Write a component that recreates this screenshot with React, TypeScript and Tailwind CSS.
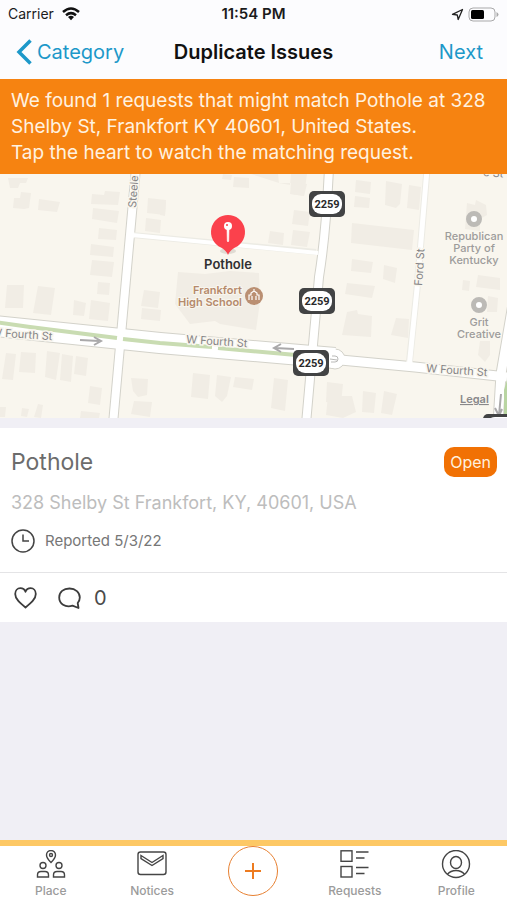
import { useState } from "react";
import type { ReactNode } from "react";

const buildings = [
  "8,4 28,4 26,9 20,9 18,14 10,14 9,9",
  "14,24 20,24 21,18 31,19 29,34 24,35 13,34",
  "39,25 60,28 57,38 38,36",
  "92,20 104,21 105,17 120,18 118,31 91,30",
  "93,34 119,37 117,49 92,45",
  "99,54 117,56 116,66 98,65",
  "91,70 114,73 113,83 90,81",
  "92,86 114,88 112,103 90,101",
  "98,108 110,109 109,121 97,120",
  "148,24 166,26 165,41 147,39",
  "146,44 161,46 160,59 145,57",
  "7,111 24,111 23,134 5,134",
  "38,112 55,114 51,141 33,139",
  "74,126 86,129 84,142 73,141",
  "91,126 110,129 108,147 89,145",
  "144,116 160,118 158,134 141,132",
  "142,134 161,136 160,147 141,145",
  "6,179 16,180 13,206 2,205",
  "21,178 36,179 35,199 19,198",
  "47,177 60,179 56,206 45,203",
  "62,180 73,182 71,208 60,206",
  "76,182 88,184 86,202 74,200",
  "90,212 102,214 100,231 88,229",
  "38,230 43,231 41,244 34,243",
  "22,234 29,235 27,243 21,242",
  "0,233 6,233 5,243 0,243",
  "81,237 100,239 99,244 80,244",
  "131,204 148,205 147,221 138,223 133,217",
  "134,227 152,228 150,243 131,240",
  "160,26 166,28 165,42 160,41",
  "234,3 249,4 249,14 233,13",
  "223,0 232,1 231,6 222,5",
  "251,0 278,0 279,9 290,11 291,0 307,0 304,22 291,20 291,9 279,9",
  "291,8 307,10 304,22 290,20",
  "294,36 310,38 308,52 292,50",
  "270,57 284,59 283,71 268,69",
  "293,56 310,58 307,73 291,71",
  "178,98 205,100 230,97 259,99 260,128 256,156 220,150 215,147 190,150 175,130",
  "193,199 210,201 208,225 191,223",
  "217,201 231,203 227,222 222,228 215,222",
  "235,203 254,205 252,216 233,213",
  "274,204 288,206 285,237 271,234",
  "327,208 343,210 341,230 326,228",
  "328,222 352,222 356,238 343,244 326,241",
  "363,217 376,219 374,239 362,238",
  "384,217 397,220 392,241 381,239",
  "356,6 371,8 370,20 355,18",
  "355,22 370,24 369,34 354,33",
  "386,7 402,10 400,30 396,34 385,31",
  "409,11 421,13 419,36 407,34",
  "352,49 414,56 412,76 351,69",
  "352,85 373,88 371,99 351,97",
  "384,91 397,94 395,109 383,105",
  "347,109 375,112 372,124 345,120",
  "347,138 357,136 358,140 372,142 371,163 342,161",
  "396,144 409,145 408,164 391,161",
  "467,29 475,31 476,26 486,31 487,41 480,45 480,57 465,55",
  "478,101 500,104 500,116 476,113",
  "463,106 470,107 469,117 462,116",
  "488,122 498,124 497,138 487,138",
  "480,167 490,167 490,181 485,188 478,181",
];

const routeShields = [
  { x: 327, y: 30 },
  { x: 317, y: 127 },
  { x: 311, y: 189 },
  { x: 501, y: 253 },
];

function IssueMap() {
  return (
    <svg
      viewBox="0 0 507 244"
      className="block w-full"
      role="img"
      aria-label="Map"
      fontFamily="Inter, sans-serif"
      fill="none"
    >
      <rect width="507" height="244" fill="#f9f6ee" />
      <g fill="#f1ede5">
        {buildings.map((points) => (
          <polygon key={points} points={points} />
        ))}
      </g>

      {/* road edges */}
      <g stroke="#d3d2ca">
        <path d="M136 -6L113 250" strokeWidth="10" />
        <path d="M329 -6Q326 60 319 103L306 250" strokeWidth="10" />
        <path d="M-5 152L160 169L335 184" strokeWidth="22" />
        <path d="M330 185L415 193L507 203" strokeWidth="11" />
        <path d="M513 130L501 200L498 250" strokeWidth="11" />
      </g>
      <circle cx="335" cy="185" r="10" fill="#fff" stroke="#d3d2ca" />
      <g stroke="#ecebe4">
        <path d="M132 61L316 78" strokeWidth="6" />
        <path d="M427 -5L417 115L409 192" strokeWidth="7" />
      </g>

      {/* road surface */}
      <g stroke="#fff">
        <path d="M132 61L318 79" strokeWidth="4" />
        <path d="M427 -5L417 115L409 194" strokeWidth="5" />
        <path d="M136 -6L113 250" strokeWidth="8" />
        <path d="M329 -6Q326 60 319 103L306 250" strokeWidth="8" />
        <path d="M-5 152L160 169L335 184" strokeWidth="20" />
        <path d="M330 185L415 193L507 203" strokeWidth="9" />
        <path d="M513 130L501 200L498 250" strokeWidth="9" />
      </g>
      <g stroke="#c9dcb2" strokeWidth="4">
        <path d="M-5 148L30 153L117 164" />
        <path d="M123 165L160 169L212 173" />
        <path d="M218 174L296 181" />
      </g>
      <path d="M507 206L504 216V244H507Z" fill="#b9d5a2" />
      <path d="M330 185L337 186M332 182H335A3 3 0 0 1 335 188H331" stroke="#b9b9b7" />

      <g stroke="#aaa9aa" strokeWidth="2">
        <path d="M80 166L99 167M94 163L101 167L94 171" />
        <path d="M294 175L275 174M281 170L274 174L281 178" />
        <path d="M501 220L499 241M495 234L499 242L502 235" />
      </g>

      {/* street names */}
      <g fill="#858486" stroke="#f9f6ee" strokeWidth="3" paintOrder="stroke" fontSize="11">
        <text transform="translate(136 34) rotate(-86)">Steele</text>
        <text transform="translate(422 112) rotate(-86)">Ford St</text>
        <text transform="translate(-9 162) rotate(4)">W Fourth St</text>
        <text transform="translate(186 169) rotate(4)">W Fourth St</text>
        <text transform="translate(426 198) rotate(4)">W Fourth St</text>
        <text transform="translate(483 2) rotate(4)">e St</text>
      </g>

      {/* places */}
      <g textAnchor="middle" fill="#9d9c9b" stroke="#f9f6ee" strokeWidth="2" paintOrder="stroke" fontSize="11" fontWeight="500">
        <text x="474" y="66">Republican</text>
        <text x="474" y="78">Party of</text>
        <text x="474" y="90">Kentucky</text>
        <text x="479" y="152">Grit</text>
        <text x="479" y="164">Creative</text>
      </g>
      <g fill="#fff" stroke="#bcbab6" strokeWidth="5">
        <circle cx="474" cy="45" r="5.5" />
        <circle cx="479" cy="131" r="5.5" />
      </g>
      <g textAnchor="end" fill="#b58a6c" stroke="#f9f6ee" strokeWidth="2" paintOrder="stroke" fontSize="11" fontWeight="600">
        <text x="242" y="120">Frankfort</text>
        <text x="242" y="132">High School</text>
      </g>
      <circle cx="254" cy="122" r="9" fill="#ba8f72" />
      <path
        d="M249 126V121H251V119L254 117L257 119V121H259V126M252 126V122M256 126V122M254 117V115"
        stroke="#fff"
        strokeWidth="1.2"
      />

      {/* route shields */}
      {routeShields.map(({ x, y }) => (
        <g key={`${x}-${y}`} transform={`translate(${x} ${y})`}>
          <rect x="-18" y="-13" width="36" height="26" rx="5" fill="#424344" />
          <rect x="-15" y="-10" width="30" height="20" rx="9" fill="#fff" />
          <text
            y="4"
            textAnchor="middle"
            fill="#29292a"
            fontFamily="Roboto, sans-serif"
            fontSize="11"
            fontWeight="700"
          >
            2259
          </text>
        </g>
      ))}

      <text x="460" y="229" fill="#89888a" fontSize="11" fontWeight="600" textDecoration="underline">
        Legal
      </text>

      {/* pin */}
      <ellipse cx="228" cy="77" rx="8" ry="3" fill="#e0dbd3" />
      <path d="M228 41A17 17 0 0 1 235 73.500Q230 76 228 81Q226 76 221 73.500A17 17 0 0 1 228 41Z" fill="#fb414c" />
      <circle cx="228" cy="52" r="4" fill="#fff" />
      <circle cx="227" cy="51" r="1" fill="#fb414c" />
      <path d="M227 55H229L228.700 67L228 68L227.300 67Z" fill="#fff" stroke="#fff" strokeWidth=".6" />
      <text
        x="228"
        y="95"
        textAnchor="middle"
        fill="#303032"
        stroke="#f9f6ee"
        strokeWidth="2"
        paintOrder="stroke"
        fontSize="13"
        fontWeight="600"
      >
        Pothole
      </text>
    </svg>
  );
}

function StatusBar() {
  return (
    <div className="grid h-7 grid-cols-3 items-center px-2 text-sm text-[#1b1b1c]">
      <div className="flex items-center gap-2">
        <span>Carrier</span>
        <svg width="18" height="14" viewBox="0 0 18 14" fill="none" stroke="#111" strokeWidth="2.500">
          <path d="M1 5Q9 -2 17 5" />
          <path d="M4 8.200Q9 4 14 8.200" />
          <path d="M6 10Q9 7.500 12 10L9 13.300Z" fill="#111" stroke="none" />
        </svg>
      </div>
      <span className="text-center text-[15px] font-semibold">11:54 PM</span>
      <div className="flex items-center justify-end gap-1">
        <svg width="13" height="13" viewBox="0 0 13 13" fill="none" stroke="#222" strokeWidth="1.300">
          <path d="M11.500 1.500L7.200 11.500L6.300 7L1.500 6.300Z" strokeLinejoin="round" />
        </svg>
        <svg width="31" height="15" viewBox="0 0 31 15" fill="none">
          <rect x="1" y="1" width="26" height="13" rx="4" stroke="#a9a9aa" />
          <rect x="3" y="3" width="13" height="9" rx="1.500" fill="#000" />
          <path d="M28.500 5V10Q30.500 9 30.500 7.500T28.500 5Z" fill="#a9a9aa" />
        </svg>
      </div>
    </div>
  );
}

function Tab({ label, children }: { label: string; children: ReactNode }) {
  return (
    <button className="flex w-1/5 flex-col items-center gap-[3px] pt-1 text-xs font-medium text-[#9b9b9b]">
      <svg width="32" height="30" viewBox="0 0 32 30" fill="none" stroke="#454545" strokeWidth="1.400">
        {children}
      </svg>
      {label}
    </button>
  );
}

export default function App() {
  const [liked, setLiked] = useState(false);

  return (
    <div className="flex min-h-screen flex-col bg-[#f0eff5] font-[Inter,sans-serif]">
      <header className="bg-[#fcfcfe]">
        <StatusBar />
        <div className="grid h-[51px] grid-cols-[1fr_auto_1fr] items-center px-4 pb-[3px] text-xl">
          <button className="flex items-center gap-1 text-[#1d98c9]">
            <svg width="17" height="26" viewBox="0 0 17 26" fill="none" stroke="currentColor" strokeWidth="3.500">
              <path d="M14.500 1.500L3 13L14.500 24.500" />
            </svg>
            Category
          </button>
          <h1 className="font-semibold text-[#111]">Duplicate Issues</h1>
          <button className="justify-self-end pr-2 text-[#1d98c9]">Next</button>
        </div>
      </header>

      <p className="bg-[#f68311] px-[11px] pt-[9px] pb-2 text-[19px] leading-[26px] text-[#fff2e0]">
        We found 1 requests that might match Pothole at 328 Shelby St, Frankfort KY 40601, United States.
        <br />
        Tap the heart to watch the matching request.
      </p>

      <IssueMap />

      <main className="mt-[10px] bg-white">
        <section className="px-[11px] pt-[18px] pb-[19px]">
          <div className="flex items-center justify-between">
            <h2 className="text-[23px] leading-8 text-[#6c6c6c]">Pothole</h2>
            <span className="-mr-px rounded-[10px] bg-[#f17104] px-[6px] py-[3px] text-base text-[#fff0df]">
              Open
            </span>
          </div>
          <p className="mt-[13px] text-lg leading-6 text-[#bdbdbd]">328 Shelby St Frankfort, KY, 40601, USA</p>
          <div className="mt-[14px] flex items-center gap-[10px] text-[15px] text-[#777]">
            <svg width="24" height="24" viewBox="0 0 24 24" fill="none" stroke="#444" strokeWidth="1.500">
              <circle cx="12" cy="12" r="11" />
              <path d="M12 5.500V12H18" />
            </svg>
            Reported 5/3/22
          </div>
        </section>
        <div className="flex h-[50px] items-center border-t border-[#e4e4e6] px-[14px] text-xl text-[#4a4a4a]">
          <button aria-label="Watch" aria-pressed={liked} onClick={() => setLiked(!liked)}>
            <svg width="23" height="22" viewBox="0 0 23 22" fill={liked ? "#f17104" : "none"} stroke="#3c3c3c" strokeWidth="1.800">
              <path
                d="M11.500 20.500C6 16 1.200 12 1.200 7C1.200 3.500 3.500 1.200 6.300 1.200C8.700 1.200 10.700 2.500 11.500 4.800C12.300 2.500 14.300 1.200 16.700 1.200C19.500 1.200 21.800 3.500 21.800 7C21.800 12 17 16 11.500 20.500Z"
                strokeLinejoin="round"
              />
            </svg>
          </button>
          <button className="ml-[21px] flex items-center gap-[13px]">
            <svg width="23" height="22" viewBox="0 0 23 22" fill="none" stroke="#3c3c3c" strokeWidth="1.800">
              <path
                d="M20.500 21L14.500 18.700C7 21 1.200 16.500 1.200 10.500C1.200 5 5.500 1.500 11.500 1.500C17.500 1.500 21.800 5.500 21.800 10.500C21.800 12.500 21 14.500 19.700 16Z"
                strokeLinejoin="round"
              />
            </svg>
            0
          </button>
        </div>
      </main>

      <nav className="mt-auto flex h-[60px] border-t-[6px] border-[#fdc865] bg-white">
        <Tab label="Place">
          <path d="M16 12.500Q11.500 8 11.500 5A4.500 4.500 0 0 1 20.500 5Q20.500 8 16 12.500Z" />
          <circle cx="16" cy="5" r="1.500" />
          <circle cx="8" cy="15.500" r="3" />
          <circle cx="24" cy="15.500" r="3" />
          <path d="M2.500 27V25Q2.500 21.500 6 21.500H10Q13.500 21.500 13.500 25V27Z" />
          <path d="M18.500 27V25Q18.500 21.500 22 21.500H26Q29.500 21.500 29.500 25V27Z" />
        </Tab>
        <Tab label="Notices">
          <rect x="2" y="2" width="28" height="22.500" rx="2.500" />
          <path d="M5 5.500L16 12.500L27 5.500V8.500L16 15.500L5 8.500Z" />
        </Tab>
        <div className="flex w-1/5 items-start justify-center">
          <button
            aria-label="Add"
            className="flex size-[50px] shrink-0 items-center justify-center rounded-full border border-[#e78031] text-[#ed7b20]"
          >
            <svg width="16" height="16" viewBox="0 0 16 16" stroke="currentColor" strokeWidth="2">
              <path d="M8 0V16M0 8H16" />
            </svg>
          </button>
        </div>
        <Tab label="Requests">
          <rect x="2" y="0.800" width="11" height="10.500" />
          <rect x="2" y="16.500" width="11" height="10.500" />
          <path d="M17 2H29.500M17 8H25.500M17 17.500H29.500M17 23.500H25.500" />
        </Tab>
        <Tab label="Profile">
          <circle cx="16" cy="14" r="13.500" />
          <ellipse cx="16" cy="12.500" rx="5.500" ry="6" />
          <path d="M7.500 24.300Q10.500 20.500 16 20.500T24.500 24.300" />
        </Tab>
      </nav>
    </div>
  );
}
